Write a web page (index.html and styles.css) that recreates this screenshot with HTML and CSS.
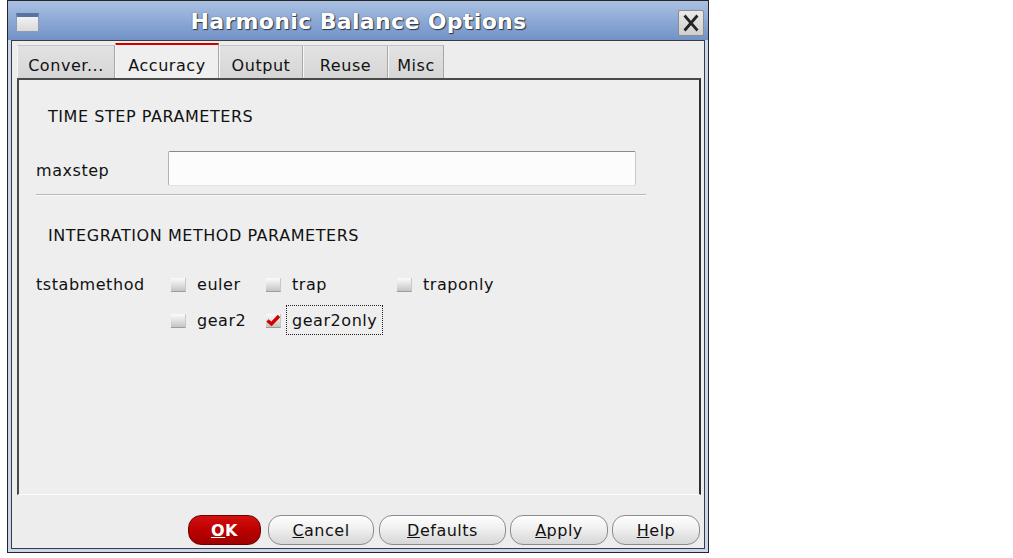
FILE: index.html
```html
<!DOCTYPE html>
<html>
<head>
<meta charset="utf-8">
<link rel="stylesheet" href="styles.css">
</head>
<body>
<div class="window">
  <div class="titlebar">
    <span class="winicon"></span>
    <span class="title">Harmonic Balance Options</span>
    <span class="close">
      <svg width="26" height="26" viewBox="0 0 26 26"><path d="M7 6 L19 20 M19 6 L7 20" stroke="#222" stroke-width="3" stroke-linecap="square"/></svg>
    </span>
  </div>
  <div class="frame">
    <div class="dialog">
      <div class="tabs">
        <div class="tab t-conv">Conver...</div>
        <div class="tab t-acc active">Accuracy</div>
        <div class="tab t-out">Output</div>
        <div class="tab t-reuse">Reuse</div>
        <div class="tab t-misc">Misc</div>
      </div>
      <div class="panel">
        <div class="section s-first">TIME STEP PARAMETERS</div>
        <div class="field-row">
          <span class="label l-mid">maxstep</span>
          <div class="input"></div>
        </div>
        <div class="sep"></div>
        <div class="section s-second">INTEGRATION METHOD PARAMETERS</div>
        <div class="radio-row">
          <span class="label l-top">tstabmethod</span>
          <div class="checks">
            <div class="check"><span class="box"></span><span class="ctext">euler</span></div>
            <div class="check"><span class="box"></span><span class="ctext">trap</span></div>
            <div class="check"><span class="box"></span><span class="ctext">traponly</span></div>
            <div class="check"><span class="box"></span><span class="ctext">gear2</span></div>
            <div class="check"><span class="box checked"><svg width="16" height="14" viewBox="0 0 16 14"><path d="M2.5 7.5 L6.5 11 L14 3" fill="none" stroke="#d40000" stroke-width="3.4"/></svg></span><span class="ctext focus">gear2only</span></div>
          </div>
        </div>
      </div>
      <div class="buttons">
        <button class="btn ok"><u>O</u>K</button>
        <button class="btn b-cancel"><u>C</u>ancel</button>
        <button class="btn b-def"><u>D</u>efaults</button>
        <button class="btn b-apply"><u>A</u>pply</button>
        <button class="btn b-help"><u>H</u>elp</button>
      </div>
    </div>
  </div>
</div>
</body>
</html>
```
FILE: styles.css
```css
html, body {
  margin: 0;
  padding: 0;
  background: #ffffff;
}
body {
  font-family: "DejaVu Sans", "Liberation Sans", sans-serif;
  font-size: 16px;
  letter-spacing: 0.55px;
  color: #111;
}
.window {
  margin-left: 7px;
  width: 702px;
  height: 553px;
  box-sizing: border-box;
  border: 1px solid #262626;
  background: #c9d6ec;
  display: flex;
  flex-direction: column;
}
.titlebar {
  height: 39px;
  flex: none;
  display: flex;
  align-items: center;
  background: linear-gradient(#aac0e2, #8aa7d4 55%, #7292c7);
}
.winicon {
  margin-left: 8px;
  width: 23px;
  height: 19px;
  margin-top: 3px;
  box-sizing: border-box;
  border: 1px solid #8a9cb8;
  border-top: 4px solid #56749f;
  background: linear-gradient(#f2f2f2, #d9d9d9);
}
.title {
  flex: 1;
  text-align: center;
  color: #ffffff;
  font-weight: bold;
  font-size: 22px;
  letter-spacing: 0.35px;
  text-shadow: 1px 1px 1px #2c3444, 0 0 1px #3a4254;
  margin-top: 2px;
}
.close {
  width: 26px;
  height: 26px;
  margin-right: 4px;
  margin-top: 5px;
  box-sizing: border-box;
  border: 1px solid #8d8d8d;
  border-radius: 2px;
  background: linear-gradient(#e9e9e9, #cfcfcf);
  display: flex;
  align-items: center;
  justify-content: center;
}
.close svg { display: block; }
.frame {
  flex: 1;
  padding: 0 3px 3px 3px;
  display: flex;
}
.dialog {
  flex: 1;
  border: 1px solid #3c3c3c;
  background: #ededed;
  display: flex;
  flex-direction: column;
}
.tabs {
  height: 35px;
  padding: 2px 0 0 5px;
  display: flex;
  align-items: flex-end;
  flex: none;
}
.tab {
  height: 33px;
  box-sizing: border-box;
  padding-top: 10px;
  text-align: center;
  background: linear-gradient(#e2e2e2, #d6d6d6);
  border-top: 1px solid #c4c4c4;
  border-left: 1px solid #f6f6f6;
  border-right: 1px solid #a8a8a8;
}
.tab.active {
  height: 35px;
  padding-top: 11px;
  background: #efefef;
  border-top: 2px solid #d00000;
}
.t-conv { width: 98px; }
.t-acc { width: 104px; }
.t-out { width: 84px; }
.t-reuse { width: 85px; }
.t-misc { width: 56px; }
.panel {
  margin: 0 3px 0 5px;
  height: 417px;
  box-sizing: border-box;
  flex: none;
  border-top: 2px solid #4a4a4a;
  border-left: 2px solid #4a4a4a;
  border-right: 2px solid #2e2e2e;
  border-bottom: 1px solid #fbfbfb;
  background: #eeeeee;
  padding-left: 17px;
}
.section {
  line-height: 20px;
  margin-left: 12px;
}
.s-first { margin-top: 27px; }
.s-second { margin-top: 30px; }
.field-row {
  margin-top: 24px;
  display: flex;
  align-items: center;
}
.label {
  width: 132px;
  flex: none;
}
.l-mid {
  margin-top: 3px;
}
.input {
  width: 468px;
  height: 35px;
  box-sizing: border-box;
  background: #fcfcfc;
  border-top: 1px solid #8a8a8a;
  border-left: 1px solid #b4b4b4;
  border-right: 1px solid #c8c8c8;
  border-bottom: 1px solid #e2e2e2;
  border-radius: 2px;
}
.sep {
  margin-top: 8px;
  width: 610px;
  height: 1px;
  background: #b8b8b8;
  border-bottom: 1px solid #fafafa;
}
.radio-row {
  margin-top: 23px;
  display: flex;
  align-items: flex-start;
}
.l-top {
  line-height: 30px;
  margin-top: 1px;
}
.checks {
  margin-left: 3px;
  display: grid;
  grid-template-columns: 95px 131px auto;
  row-gap: 6px;
}
.check {
  display: flex;
  align-items: center;
  height: 30px;
}
.box {
  width: 15px;
  height: 14px;
  box-sizing: border-box;
  background: linear-gradient(#fbfbfb, #e4e4e4 45%, #c4c4c4);
  border-bottom: 1px solid #9c9c9c;
  border-right: 1px solid #c8c8c8;
  margin-top: 2px;
  flex: none;
  position: relative;
}
.box.checked svg {
  position: absolute;
  left: -1px;
  top: -1px;
}
.ctext {
  margin-left: 5px;
  padding: 0 5px;
  height: 30px;
  line-height: 30px;
  box-sizing: border-box;
  border: 1px dotted transparent;
}
.ctext.focus {
  border-color: #222;
}
.buttons {
  flex: 1;
  display: flex;
  justify-content: flex-end;
  align-items: flex-start;
  padding: 20px 4px 0 0;
  gap: 4px;
}
.btn {
  height: 30px;
  box-sizing: border-box;
  font-family: "DejaVu Sans", "Liberation Sans", sans-serif;
  font-size: 16px;
  letter-spacing: 0.5px;
  color: #111;
  border: 1px solid #8c8c8c;
  border-radius: 13px;
  background: linear-gradient(#fefefe, #f0f0f0 45%, #d6d6d6);
  padding: 0;
  margin: 0;
}
.ok {
  width: 73px;
  margin-right: 3px;
  background: linear-gradient(#d41010, #bb0000 50%, #a00000);
  border-color: #6e0000;
  color: #ffffff;
  font-weight: bold;
}
.b-cancel { width: 106px; margin-right: 1px; }
.b-def { width: 127px; }
.b-apply { width: 98px; }
.b-help { width: 88px; }
```
